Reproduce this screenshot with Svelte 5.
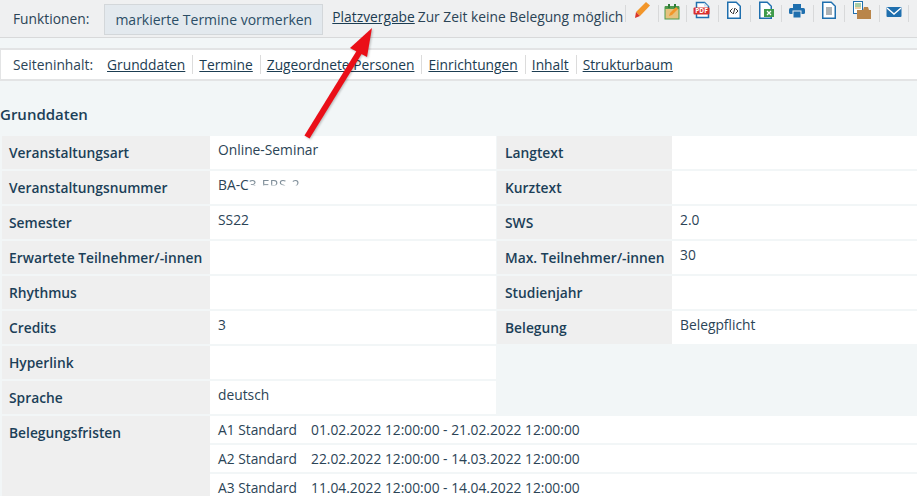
<script>
  const links = ['Grunddaten', 'Termine', 'Zugeordnete Personen', 'Einrichtungen', 'Inhalt', 'Strukturbaum']

  const rows = [
    ['Veranstaltungsart', 'Online-Seminar', 'Langtext', ''],
    ['Veranstaltungsnummer', null, 'Kurztext', ''],
    ['Semester', 'SS22', 'SWS', '2.0'],
    ['Erwartete Teilnehmer/-innen', '', 'Max. Teilnehmer/-innen', '30'],
    ['Rhythmus', '', 'Studienjahr', ''],
    ['Credits', '3', 'Belegung', 'Belegpflicht'],
  ]

  const fristen = [
    ['A1 Standard', '01.02.2022 12:00:00 - 21.02.2022 12:00:00'],
    ['A2 Standard', '22.02.2022 12:00:00 - 14.03.2022 12:00:00'],
    ['A3 Standard', '11.04.2022 12:00:00 - 14.04.2022 12:00:00'],
  ]
</script>

<main>
  <div class="functions">
    <span class="label">Funktionen:</span>
    <button class="mark">markierte Termine vormerken</button>
    <a class="place" href="#top">Platzvergabe</a>
    <span class="note">Zur Zeit keine Belegung möglich</span>
    <div class="icons">
      <span class="icon">
        <svg width="18" height="18" viewBox="0 0 18 18"><path d="M13 1l4 3.500L7 15 3 11z" fill="#f2962a"/><path d="M3 11l4 4-5 2z" fill="#d9352b"/></svg>
      </span>
      <span class="icon">
        <svg width="18" height="18" viewBox="0 0 18 18"><rect x="2" y="6" width="14" height="12" fill="#e6c27e" stroke="#4f9a4c"/><rect x="2" y="5" width="14" height="3" fill="#4f9a4c"/><rect x="5" y="3" width="2" height="4" fill="#2f7d3a"/><rect x="11" y="3" width="2" height="4" fill="#2f7d3a"/><path d="M6 15l1-3 6-6 2 2-6 6z" fill="#f2962a"/></svg>
      </span>
      <span class="icon">
        <svg width="18" height="18" viewBox="0 0 18 18"><path d="M3.500 1.500h8l4 4v11h-12z" fill="#fff" stroke="#1f6fae" stroke-width="1.500"/><path d="M11 1.500v4h4.500" fill="#cfe0ee"/><rect x="0.500" y="6.500" width="16" height="7" rx="1" fill="#d9302e"/><text x="8.500" y="12.200" class="pdf">PDF</text></svg>
      </span>
      <span class="icon">
        <svg width="18" height="18" viewBox="0 0 18 18"><path d="M2 0.500h9.500L16 5V18H2z" fill="#1f6fae"/><path d="M3.500 2H11L14.500 5.500v11h-11z" fill="#fff"/><path d="M7.500 7.500L5 10l2.500 2.500M10.500 7.500L13 10l-2.500 2.500M9.900 7l-1.600 6" fill="none" stroke="#333" stroke-width="1"/></svg>
      </span>
      <span class="icon">
        <svg width="18" height="18" viewBox="0 0 18 18"><path d="M2 0.500h8.500L15 5V18H2z" fill="#1f6fae"/><path d="M3.500 2H10L13.500 5.500v11h-10z" fill="#fff"/><rect x="7" y="8" width="10" height="8" fill="#3f9a4a"/><path d="M10 10l4 4M14 10l-4 4" stroke="#fff" stroke-width="1.200"/></svg>
      </span>
      <span class="icon">
        <svg width="18" height="18" viewBox="0 0 18 18"><rect x="5" y="3" width="8" height="4" fill="#1f6fae"/><rect x="1" y="7" width="16" height="6" rx="1.500" fill="#1f6fae"/><rect x="5" y="10" width="8" height="7" fill="#1f6fae" stroke="#eff0f1"/></svg>
      </span>
      <span class="icon">
        <svg width="18" height="18" viewBox="0 0 18 18"><path d="M2 0.500h9.500L16 5V18H2z" fill="#1f6fae"/><path d="M3.500 2H11L14.500 5.500v11h-11z" fill="#fff"/><rect x="6" y="6" width="6" height="8" fill="#aeb2b4"/></svg>
      </span>
      <span class="icon">
        <svg width="18" height="18" viewBox="0 0 18 18"><rect x="0.500" y="0.500" width="9" height="12" fill="#fff" stroke="#1f6fae"/><path d="M2 3h6M2 5h6" stroke="#4f9a4c"/><path d="M2 7h6" stroke="#d9a24a"/><path d="M4 9h6l1-3h4l1 3h2v9H4z" fill="#b9854a"/></svg>
      </span>
      <span class="icon">
        <svg width="18" height="18" viewBox="0 0 18 18"><rect x="1.500" y="6" width="15" height="10" rx="1" fill="#1f6fae"/><path d="M2 7l7 6 7-6" fill="none" stroke="#fff" stroke-width="1.400"/></svg>
      </span>
      <span class="icon">
        <svg width="18" height="18" viewBox="0 0 18 18"><rect x="7" y="6" width="15" height="10" rx="1" fill="#1f6fae"/></svg>
      </span>
    </div>
  </div>

  <nav class="contents">
    <span class="label">Seiteninhalt:</span>
    {#each links as link}
      <a href="#top">{link}</a>
    {/each}
  </nav>

  <h2>Grunddaten</h2>

  <div class="table">
    {#each rows as row}
      <div class="th">{row[0]}</div>
      <div class="td">
        {#if row[1] === null}
          BA-C<span class="erased">3 FRS 2</span>
        {:else}
          {row[1]}
        {/if}
      </div>
      <div class="th">{row[2]}</div>
      <div class="td">{row[3]}</div>
    {/each}
    <div class="th">Hyperlink</div>
    <div class="td"></div>
    <div class="blank"></div>
    <div class="blank"></div>
    <div class="th">Sprache</div>
    <div class="td">deutsch</div>
    <div class="blank"></div>
    <div class="blank"></div>
    <div class="th last">Belegungsfristen</div>
    <div class="wide">
      {#each fristen as f}
        <div class="frist"><span class="name">{f[0]}</span><span>{f[1]}</span></div>
      {/each}
    </div>
  </div>

  <svg class="arrow" width="100" height="130" viewBox="0 0 100 130">
    <path d="M7 117L60 31" stroke="#ea0f18" stroke-width="6" fill="none"/>
    <path d="M72 8L50 28L67 37z" fill="#ea0f18"/>
  </svg>
</main>

<style>
  :global(body) {
    margin: 0;
    background: #f2f6f7;
  }
  main {
    position: relative;
    width: 917px;
    height: 496px;
    overflow: hidden;
    font-family: "Open Sans", sans-serif;
    font-size: 13.8px;
    color: #2b4456;
    background: #f2f6f7;
  }
  a {
    color: #1c3d52;
    text-decoration: underline;
  }
  .functions {
    display: flex;
    align-items: center;
    height: 37px;
    padding-left: 13px;
    background: #eff0f1;
    border-bottom: 1px solid #d8d9da;
    white-space: nowrap;
  }
  .label {
    margin-right: 15px;
    flex: none;
  }
  .mark {
    flex: none;
    height: 31px;
    width: 219px;
    margin-top: 1px;
    padding: 0;
    font: inherit;
    font-size: 14px;
    color: #2b4e66;
    background: #e3e9ee;
    border: 1px solid #d3d7da;
  }
  .place {
    margin-left: 9px;
    margin-top: -4px;
  }
  .note {
    margin-left: 3px;
    margin-top: -4px;
  }
  .icons {
    display: flex;
    margin-left: 2px;
    align-self: flex-start;
    margin-top: 1px;
  }
  .icon {
    display: flex;
    justify-content: center;
    flex: none;
    width: 32px;
    height: 22px;
    background: linear-gradient(#d8d9da, #d8d9da) left 4px / 1px 17px no-repeat;
  }
  .icon:nth-child(1) { width: 33px; }
  .icon:nth-child(2) { width: 28px; }
  .icon:nth-child(5) { width: 31px; }
  .icon:nth-child(7) { width: 31px; }
  .icon:nth-child(8) { width: 35px; }
  .icon:nth-child(9) { width: 29px; }
  .icon svg {
    overflow: visible;
  }
  .pdf {
    font-size: 6.500px;
    font-weight: 700;
    fill: #fff;
    text-anchor: middle;
  }
  .contents {
    display: flex;
    align-items: center;
    height: 29px;
    margin-top: 10px;
    padding-left: 13px;
    background: #fff;
    border: 2px solid #e3e4e5;
    border-width: 2px 0 2px 1px;
    white-space: nowrap;
  }
  .contents .label {
    margin-left: -1px;
    margin-right: 14px;
  }
  .contents a {
    padding-right: 7px;
    margin-right: 6px;
    border-right: 1px solid #dcdcdc;
    line-height: 19px;
  }
  .contents a:last-child {
    border-right: 0;
  }
  h2 {
    margin: 23px 0 12px 0;
    font-size: 15px;
    line-height: 20px;
    font-weight: 600;
    color: #1c3f58;
  }
  .table {
    display: grid;
    grid-template-columns: 208px 286px 176px 245px;
    grid-auto-rows: 33px;
    row-gap: 2px;
    margin-left: 2px;
  }
  .th {
    padding: 7px 0 0 7px;
    line-height: 19px;
    font-weight: 600;
    color: #1c3f58;
    background: #efefef;
    white-space: nowrap;
  }
  .th:nth-child(4n + 3) {
    margin-left: 1px;
    padding-left: 8px;
  }
  .td {
    padding: 4px 0 0 8px;
    line-height: 19px;
    background: #fff;
    white-space: nowrap;
  }
  .erased {
    display: inline-block;
    letter-spacing: 0.8px;
    opacity: 0.6;
    mask-image: linear-gradient(to bottom, #000 0, #000 48%, transparent 60%);
  }
  .th.last {
    height: 90px;
  }
  .wide {
    grid-column: 2 / 5;
  }
  .frist {
    display: flex;
    height: 27px;
    margin-bottom: 2px;
    padding: 4px 0 0 8px;
    background: #fff;
    box-sizing: border-box;
    line-height: 19px;
  }
  .name {
    width: 93px;
  }
  .arrow {
    position: absolute;
    left: 300px;
    top: 20px;
    filter: drop-shadow(1px 1px 1px rgba(0, 0, 0, 0.25));
  }
</style>
